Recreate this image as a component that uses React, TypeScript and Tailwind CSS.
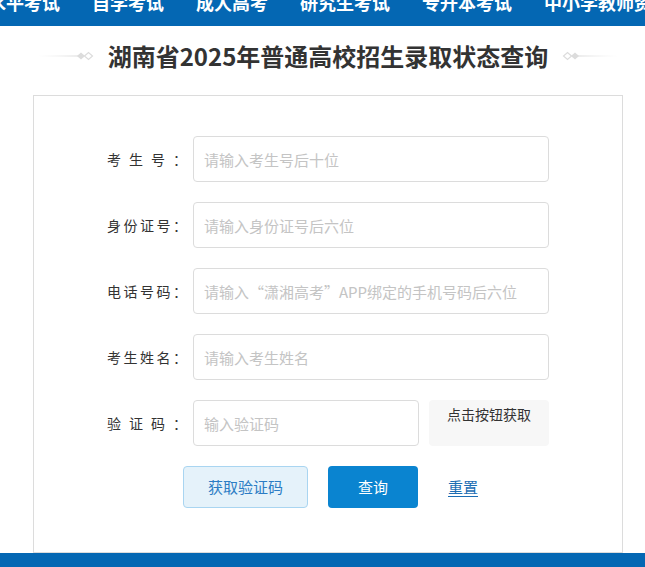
import React from "react";

const navItems = ["水平考试", "自学考试", "成人高考", "研究生考试", "专升本考试", "中小学教师资格考试"];

function Label({ chars }: { chars: string[] }) {
  return (
    <div className="w-[86px] shrink-0 flex items-center">
      <div className="w-[80px] flex justify-between text-[14px] text-[#333]">
        {chars.map((c, i) => (
          <span key={i}>{c}</span>
        ))}
      </div>
    </div>
  );
}

function Deco({ flip }: { flip?: boolean }) {
  return (
    <svg width="56" height="12" viewBox="0 0 56 12" className={flip ? "-scale-x-100" : ""}>
      <defs>
        <linearGradient id={flip ? "gr" : "gl"} x1="0" x2="1" y1="0" y2="0">
          <stop offset="0" stopColor="#e6e6e6" stopOpacity="0" />
          <stop offset="1" stopColor="#d6d6d6" />
        </linearGradient>
      </defs>
      <rect x="0" y="5.5" width="42" height="1" fill={`url(#${flip ? "gr" : "gl"})`} />
      <path d="M39 6 L43 2.5 L47 6 L43 9.5 Z" fill="#dcdcdc" />
      <path d="M46.5 6 L50.5 2.5 L54.5 6 L50.5 9.5 Z" fill="none" stroke="#dcdcdc" strokeWidth="1.2" />
    </svg>
  );
}

export default function App() {
  const font = "font-['Noto_Sans_CJK_SC','Noto_Sans',sans-serif]";
  return (
    <div className={`w-[645px] h-[567px] overflow-hidden bg-white ${font}`}>
      {/* nav */}
      <div className="h-[26px] bg-[#0467b3] overflow-hidden">
        <div className="flex gap-[32px] -mt-[7px] -ml-[12px] whitespace-nowrap">
          {navItems.map((n) => (
            <span key={n} className="text-[18px] leading-[18px] font-bold text-white">
              {n}
            </span>
          ))}
        </div>
      </div>

      {/* title */}
      <div className="ml-[33px] w-[590px] h-[69px] flex items-start justify-center pt-[14px]">
        <div className="flex items-center gap-[14px]">
          <Deco />
          <h1 className="text-[24px] leading-[32px] font-bold text-[#333] whitespace-nowrap">
            湖南省2025年普通高校招生录取状态查询
          </h1>
          <Deco flip />
        </div>
      </div>

      {/* box */}
      <div className="ml-[33px] w-[590px] h-[458px] border border-[#dcdcdc] pt-[40px]">
        <div className="flex flex-col gap-[20px] pl-[73px]">
          <div className="flex">
            <Label chars={["考", "生", "号", "："]} />
            <input
              className="w-[356px] h-[46px] border border-[#dcdcdc] rounded-[4px] px-[10px] text-[15px] outline-none placeholder:text-[#c4c4c4]"
              placeholder="请输入考生号后十位"
            />
          </div>
          <div className="flex">
            <Label chars={["身", "份", "证", "号", "："]} />
            <input
              className="w-[356px] h-[46px] border border-[#dcdcdc] rounded-[4px] px-[10px] text-[15px] outline-none placeholder:text-[#c4c4c4]"
              placeholder="请输入身份证号后六位"
            />
          </div>
          <div className="flex">
            <Label chars={["电", "话", "号", "码", "："]} />
            <input
              className="w-[356px] h-[46px] border border-[#dcdcdc] rounded-[4px] px-[10px] text-[15px] outline-none placeholder:text-[#c4c4c4]"
              placeholder="请输入“潇湘高考”APP绑定的手机号码后六位"
            />
          </div>
          <div className="flex">
            <Label chars={["考", "生", "姓", "名", "："]} />
            <input
              className="w-[356px] h-[46px] border border-[#dcdcdc] rounded-[4px] px-[10px] text-[15px] outline-none placeholder:text-[#c4c4c4]"
              placeholder="请输入考生姓名"
            />
          </div>
          <div className="flex">
            <Label chars={["验", "证", "码", "："]} />
            <input
              className="w-[226px] h-[46px] border border-[#dcdcdc] rounded-[4px] px-[10px] text-[15px] outline-none placeholder:text-[#c4c4c4]"
              placeholder="输入验证码"
            />
            <div className="ml-[10px] w-[120px] h-[46px] bg-[#f7f7f7] rounded-[4px] text-center text-[14px] leading-[28px] text-[#333]">
              点击按钮获取
            </div>
          </div>
        </div>

        <div className="flex items-center mt-[20px] pl-[149px]">
          <button className="w-[125px] h-[42px] rounded-[4px] bg-[#e5f2fa] border border-[#a9d5f1] text-[15px] text-[#2b7cc4]">
            获取验证码
          </button>
          <button className="ml-[20px] w-[90px] h-[42px] rounded-[4px] bg-[#0a84d0] text-[15px] text-white">
            查询
          </button>
          <button className="ml-[30px] text-[15px] text-[#1c6db3] underline underline-offset-[3px]">
            重置
          </button>
        </div>
      </div>

      <div className="h-[14px] bg-[#0467b3]" />
    </div>
  );
}
